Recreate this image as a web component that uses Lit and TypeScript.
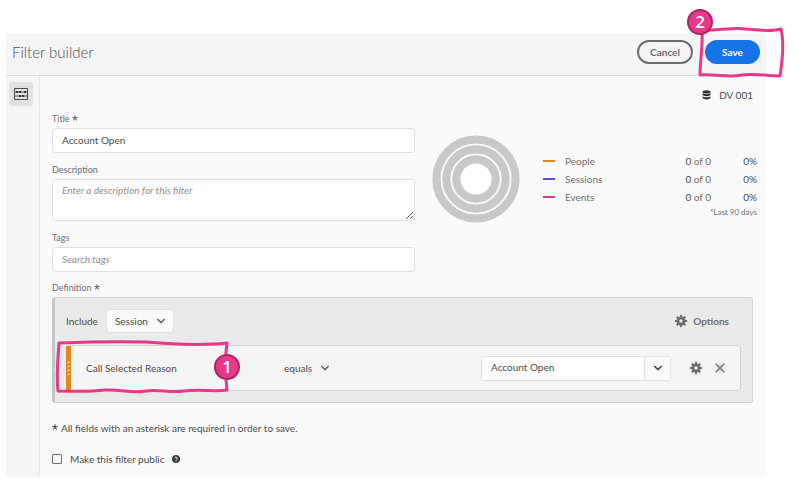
import { LitElement, html, css, svg } from "lit";
import { customElement, state } from "lit/decorators.js";

const chevron = html`<svg class="chevron" width="10" height="10" viewBox="0 0 10 10" aria-hidden="true">
  <path d="M1.7 3.4 5 6.6 8.3 3.4" fill="none" stroke="currentColor" stroke-width="1.5" stroke-linecap="round" />
</svg>`;

const teeth = [0, 45, 90, 135, 180, 225, 270, 315];
const gear = html`<svg width="14" height="14" viewBox="0 0 14 14" aria-hidden="true">
  <circle cx="7" cy="7" r="3.1" fill="none" stroke="currentColor" stroke-width="2.8" />
  ${teeth.map((a) => svg`<rect x="6" y="0.9" width="2" height="2.4" fill="currentColor" transform="rotate(${a} 7 7)" />`)}
</svg>`;

const required = html`<svg class="required" width="6" height="6" viewBox="0 0 6 6" aria-label="required">
  <path d="M3 0.2V3M3 3 0.4 2.2M3 3 5.6 2.2M3 3 1.4 5.4M3 3 4.6 5.4" fill="none" stroke="currentColor" stroke-width="1.1" />
</svg>`;

interface Metric {
  name: string;
  tone: string;
}

const metrics: Metric[] = [
  { name: "People", tone: "people" },
  { name: "Sessions", tone: "sessions" },
  { name: "Events", tone: "events" },
];

@customElement("app-root")
export class AppRoot extends LitElement {
  @state() private isPublic = false;

  static styles = css`
    :host {
      display: block;
      background: #fff;
      padding: 33px 30px 2px 6px;
      color: #4b4b4b;
      font: 10px/12px Lato, "Open Sans", sans-serif;
    }
    * {
      box-sizing: border-box;
    }
    button,
    input,
    select,
    textarea {
      font: inherit;
      color: inherit;
      margin: 0;
    }
    svg {
      display: block;
      flex: none;
    }
    .app {
      background: #f5f5f5;
    }
    .header {
      display: flex;
      align-items: center;
      gap: 12px;
      padding: 7px 6px 11px;
      border-bottom: 1px solid #dcdcdc;
    }
    h1 {
      flex: 1;
      margin: 0;
      font-size: 15px;
      line-height: 24px;
      font-weight: 300;
    }
    .pill {
      height: 24px;
      padding: 0 11px;
      border: 2px solid #6e6e6e;
      border-radius: 12px;
      background: transparent;
      color: #6e6e6e;
      font-weight: 700;
      min-width: 56px;
    }
    .pill.primary {
      min-width: 55px;
      background: #1473e6;
      border-color: #1473e6;
      color: #fff;
    }
    .marked {
      position: relative;
      display: flex;
    }
    .outline {
      position: absolute;
      pointer-events: none;
      fill: none;
      stroke: #e83889;
      stroke-width: 3;
      stroke-linejoin: round;
      stroke-linecap: round;
    }
    .outline.save {
      left: -9px;
      top: -15px;
    }
    .outline.rule {
      left: -12px;
      top: -8px;
    }
    .step {
      position: absolute;
      display: flex;
      align-items: center;
      justify-content: center;
      width: 26px;
      height: 26px;
      border: 2px solid #ab2264;
      border-radius: 50%;
      background: #e83889;
      color: #fff;
      font: 600 17px/20px "Open Sans", sans-serif;
    }
    .step.save {
      left: -18px;
      top: -31px;
    }
    .step.rule {
      left: 148px;
      top: 8px;
    }
    .body {
      display: flex;
    }
    .rail {
      flex: none;
      width: 34px;
      padding: 6px 3px;
      border-right: 1px solid #e6e6e6;
    }
    .rail-button {
      display: flex;
      align-items: center;
      justify-content: center;
      width: 24px;
      height: 24px;
      padding: 0;
      border: 0;
      border-radius: 3px;
      background: #e1e1e1;
    }
    .main {
      flex: 1;
      min-width: 0;
      padding: 13px 13px 12px 12px;
      background: #fafafa;
    }
    .view {
      display: flex;
      align-items: center;
      justify-content: flex-end;
      gap: 8px;
      margin-bottom: 12px;
    }
    .top {
      display: flex;
      align-items: flex-start;
      gap: 17px;
    }
    .fields {
      flex: 1;
      min-width: 0;
      display: flex;
      flex-direction: column;
      gap: 11px;
    }
    .field {
      display: flex;
      flex-direction: column;
      gap: 3px;
    }
    .label {
      display: flex;
      align-items: center;
      gap: 2px;
      font-size: 9px;
      color: #6e6e6e;
    }
    .required {
      margin-bottom: 2px;
    }
    .box {
      display: block;
      width: 100%;
      height: 25px;
      padding: 0 9px 2px;
      border: 1px solid #e1e1e1;
      border-radius: 3px;
      background: #fff;
      outline: 0;
    }
    .box::placeholder {
      color: #8e8e8e;
      font-style: italic;
      opacity: 1;
    }
    .box.area {
      height: 42px;
      padding: 4px 9px;
      resize: vertical;
    }
    .summary {
      flex: none;
      display: flex;
      gap: 23px;
      margin: 22px -4px 0 0;
    }
    .legend {
      margin-top: 17px;
      width: 214px;
    }
    table {
      width: 100%;
      border-collapse: collapse;
    }
    th,
    td {
      height: 18px;
      padding: 0;
      font-weight: 400;
      text-align: right;
    }
    th {
      text-align: left;
      color: #6e6e6e;
    }
    .swatch {
      width: 22px;
    }
    .percent {
      width: 46px;
    }
    .dash {
      display: block;
      width: 12px;
      height: 2px;
    }
    .people {
      background: #e68619;
    }
    .sessions {
      background: #5151d3;
    }
    .events {
      background: #d83790;
    }
    .of {
      color: #6e6e6e;
    }
    .note {
      margin: 0;
      font-size: 8px;
      text-align: right;
      color: #6e6e6e;
    }
    .definition {
      margin-top: 10px;
    }
    .container {
      padding: 11px;
      border: 1px solid #d3d3d3;
      border-left: 3px solid #c6c6c6;
      border-radius: 3px;
      background: #eaeaea;
    }
    .include {
      display: flex;
      align-items: center;
      gap: 8px;
      margin-bottom: 12px;
      padding-right: 12px;
    }
    .picker {
      position: relative;
      display: inline-flex;
      align-items: center;
    }
    .picker select {
      appearance: none;
      height: 24px;
      width: 68px;
      padding: 0 8px;
      border: 1px solid #e1e1e1;
      border-radius: 3px;
      background: #fafafa;
      outline: 0;
    }
    .picker .chevron {
      position: absolute;
      right: 8px;
      color: #6e6e6e;
      pointer-events: none;
    }
    .picker.quiet select {
      width: 46px;
      padding: 0;
      border: 0;
      background: transparent;
    }
    .picker.quiet .chevron {
      right: 0;
    }
    .plain {
      display: flex;
      align-items: center;
      gap: 5px;
      padding: 0;
      border: 0;
      background: transparent;
      color: #6e6e6e;
      font-weight: 700;
    }
    .options {
      margin-left: auto;
    }
    .rule-card {
      position: relative;
      display: flex;
      align-items: center;
      height: 46px;
      padding-right: 13px;
      border: 1px solid #d3d3d3;
      border-left: 0;
      border-radius: 3px;
      background: #f5f5f5;
    }
    .handle {
      display: flex;
      align-items: center;
      justify-content: center;
      align-self: stretch;
      width: 5px;
      background: #e68619;
    }
    .name {
      width: 198px;
      margin-left: 15px;
    }
    .combo {
      display: flex;
      width: 190px;
      height: 25px;
      margin: 0 18px 0 auto;
      border: 1px solid #e1e1e1;
      border-radius: 3px;
      background: #fff;
    }
    .combo input {
      flex: 1;
      min-width: 0;
      padding: 0 9px 2px;
      border: 0;
      background: transparent;
      outline: 0;
    }
    .combo button {
      display: flex;
      align-items: center;
      justify-content: center;
      width: 26px;
      padding: 0;
      border: 0;
      border-left: 1px solid #e1e1e1;
      background: #fafafa;
    }
    .rule-actions {
      display: flex;
      gap: 10px;
    }
    .hint {
      display: flex;
      align-items: center;
      gap: 3px;
      margin: 19px 0;
    }
    .public {
      display: flex;
      align-items: center;
      gap: 8px;
    }
    .public label {
      display: flex;
      align-items: center;
      gap: 8px;
    }
    .public input {
      appearance: none;
      width: 10px;
      height: 10px;
      border: 1px solid #6e6e6e;
      border-radius: 1px;
      background: #fff;
    }
    .public input:checked {
      background: #1473e6;
    }
  `;

  private renderSummary() {
    return html`<section class="summary">
      <svg width="88" height="88" viewBox="0 0 88 88" role="img" aria-label="Filter coverage">
        <circle cx="44" cy="44" r="43" fill="#fff" />
        <g fill="none" stroke="#c8c8c8" stroke-width="8.2">
          <circle cx="44" cy="44" r="39.5" />
          <circle cx="44" cy="44" r="29.6" />
          <circle cx="44" cy="44" r="19.7" />
        </g>
      </svg>
      <div class="legend">
        <table>
          ${metrics.map(
            (m) => html`<tr>
              <td class="swatch"><span class="dash ${m.tone}"></span></td>
              <th scope="row">${m.name}</th>
              <td>0 <span class="of">of 0</span></td>
              <td class="percent">0%</td>
            </tr>`
          )}
        </table>
        <p class="note">*Last 90 days</p>
      </div>
    </section>`;
  }

  private renderDefinition() {
    return html`<section class="field definition">
      <div class="label">Definition ${required}</div>
      <div class="container">
        <div class="include">
          <label for="scope">Include</label>
          <span class="picker"><select id="scope"><option>Session</option></select>${chevron}</span>
          <button class="plain options">${gear} Options</button>
        </div>
        <div class="rule-card">
          <span class="handle">
            <svg width="3" height="15" viewBox="0 0 3 15" fill="#fff" fill-opacity="0.8" aria-hidden="true">
              ${[0.5, 4.5, 8.5, 12.5].map((y) => svg`<rect x="0.7" y=${y} width="1.6" height="1.6" />`)}
            </svg>
          </span>
          <span class="name">Call Selected Reason</span>
          <span class="picker quiet"><select aria-label="Operator"><option>equals</option></select>${chevron}</span>
          <span class="combo">
            <input aria-label="Value" value="Account Open" />
            <button aria-label="Show values">${chevron}</button>
          </span>
          <span class="rule-actions">
            <button class="plain" aria-label="Rule settings">${gear}</button>
            <button class="plain" aria-label="Remove rule">
              <svg width="14" height="14" viewBox="0 0 14 14" aria-hidden="true">
                <path d="M2.8 2.8 11.2 11.2M11.2 2.8 2.8 11.2" stroke="currentColor" stroke-width="1.5" />
              </svg>
            </button>
          </span>
          <svg class="outline rule" width="175" height="60" viewBox="0 0 175 60" aria-hidden="true">
            <path d="M5 5 C30 4 60 3 92 4 C115 6 145 8 173 5 C171 18 171 35 173 52 C160 54 148 51 130 53 C115 55 105 51 92 53 C78 56 68 51 50 52 C35 54 22 53 4 53 C2 36 4 22 5 5Z" />
          </svg>
          <span class="step rule">1</span>
        </div>
      </div>
    </section>`;
  }

  render() {
    return html`<div class="app">
      <header class="header">
        <h1>Filter builder</h1>
        <button class="pill">Cancel</button>
        <span class="marked">
          <button class="pill primary">Save</button>
          <svg class="outline save" width="92" height="56" viewBox="0 0 92 56" aria-hidden="true">
            <path d="M6 5 C20 6 38 2 50 4 C62 5 75 7 85 4 C88 16 87 32 84 51 C70 51 58 48 46 50 C34 53 20 49 4 50 C4 36 7 22 6 5Z" />
          </svg>
          <span class="step save">2</span>
        </span>
      </header>
      <div class="body">
        <nav class="rail">
          <button class="rail-button" aria-label="Builder">
            <svg width="14" height="12" viewBox="0 0 14 12" aria-hidden="true">
              <path d="M0.5 0.5H13.5V11.5H0.5ZM0.5 4H13.5M0.5 8H13.5" fill="none" stroke="#3c3c3c" stroke-width="0.9" />
              <g fill="#222">
                <circle cx="3" cy="4" r="1.1" />
                <circle cx="6" cy="4" r="1.1" />
                <circle cx="11" cy="4" r="1.1" />
                <circle cx="6" cy="8" r="1.1" />
                <circle cx="9" cy="8" r="1.1" />
              </g>
            </svg>
          </button>
        </nav>
        <main class="main">
          <div class="view">
            <svg width="9" height="10" viewBox="0 0 9 10" fill="#2c2c2c" aria-hidden="true">
              <ellipse cx="4.5" cy="1.8" rx="4" ry="1.6" />
              <path d="M0.5 3.1C2 4.5 7 4.5 8.5 3.1V5C7.5 6.5 1.5 6.5 0.5 5ZM0.5 6.2C2 7.6 7 7.6 8.5 6.2V8.1C7.5 9.8 1.5 9.8 0.5 8.1Z" />
            </svg>
            DV 001
          </div>
          <div class="top">
            <div class="fields">
              <div class="field">
                <label class="label" for="title">Title ${required}</label>
                <input class="box" id="title" value="Account Open" />
              </div>
              <div class="field">
                <label class="label" for="description">Description</label>
                <textarea class="box area" id="description" placeholder="Enter a description for this filter"></textarea>
              </div>
              <div class="field">
                <label class="label" for="tags">Tags</label>
                <input class="box" id="tags" placeholder="Search tags" />
              </div>
            </div>
            ${this.renderSummary()}
          </div>
          ${this.renderDefinition()}
          <p class="hint">${required} All fields with an asterisk are required in order to save.</p>
          <div class="public">
            <label>
              <input
                type="checkbox"
                .checked=${this.isPublic}
                @change=${(e: Event) => (this.isPublic = (e.target as HTMLInputElement).checked)}
              />
              Make this filter public
            </label>
            <svg width="8" height="8" viewBox="0 0 8 8" aria-hidden="true">
              <circle cx="4" cy="4" r="4" fill="#3c3c3c" />
              <path d="M2.9 3.1C2.9 1.7 5.2 1.7 5.2 3.1C5.2 3.9 4.1 3.9 4.1 4.9M4.1 5.6V6.5" fill="none" stroke="#fff" stroke-width="0.9" />
            </svg>
          </div>
        </main>
      </div>
    </div>`;
  }
}
